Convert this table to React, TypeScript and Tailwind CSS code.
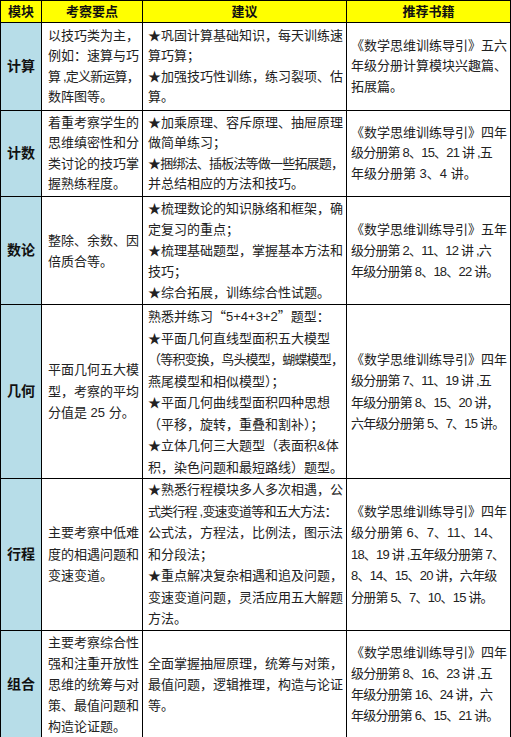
const FONT = "font-['Liberation_Sans','Noto_Sans_CJK_SC',sans-serif]";

type Row = {
  name: string;
  h: string;
  lead: string;
  points: string[];
  advice: string[];
  books: string[];
};

const rows: Row[] = [
  {
    name: "计算",
    h: "h-[88px]",
    lead: "leading-[20.5px]",
    points: ["以技巧类为主，", "例如：速算与巧", "算 ,定义新运算，", "数阵图等。"],
    advice: ["★巩固计算基础知识，每天训练速", "算巧算；", "★加强技巧性训练，练习裂项、估", "算。"],
    books: ["《数学思维训练导引》五六", "年级分册计算模块兴趣篇、", "拓展篇。"],
  },
  {
    name: "计数",
    h: "h-[86px]",
    lead: "leading-[20.5px]",
    points: ["着重考察学生的", "思维缜密性和分", "类讨论的技巧掌", "握熟练程度。"],
    advice: ["★加乘原理、容斥原理、抽屉原理", "做简单练习；", "★捆绑法、插板法等做一些拓展题，", "并总结相应的方法和技巧。"],
    books: ["《数学思维训练导引》四年", "级分册第 8、15、21 讲 ,五", "年级分册第 3、4 讲。"],
  },
  {
    name: "数论",
    h: "h-[108px]",
    lead: "leading-[21px]",
    points: ["整除、余数、因", "倍质合等。"],
    advice: ["★梳理数论的知识脉络和框架，确", "定复习的重点；", "★梳理基础题型，掌握基本方法和", "技巧；", "★综合拓展，训练综合性试题。"],
    books: ["《数学思维训练导引》五年", "级分册第 2、11、12 讲 ,六", "年级分册第 8、18、22 讲。"],
  },
  {
    name: "几何",
    h: "h-[173px]",
    lead: "leading-[21.5px]",
    points: ["平面几何五大模", "型，考察的平均", "分值是 25 分。"],
    advice: [
      "熟悉并练习“5+4+3+2”题型：",
      "★平面几何直线型面积五大模型",
      "（等积变换，鸟头模型，蝴蝶模型，",
      "燕尾模型和相似模型）；",
      "★平面几何曲线型面积四种思想",
      "（平移，旋转，重叠和割补）；",
      "★立体几何三大题型（表面积&体",
      "积，染色问题和最短路线）题型。",
    ],
    books: ["《数学思维训练导引》四年", "级分册第 7、11、19 讲 ,五", "年级分册第 8、15、20 讲，", "六年级分册第 5、7、15 讲。"],
  },
  {
    name: "行程",
    h: "h-[152px]",
    lead: "leading-[21.5px]",
    points: ["主要考察中低难", "度的相遇问题和", "变速变道。"],
    advice: [
      "★熟悉行程模块多人多次相遇，公",
      "式类行程 ,变速变道等和五大方法：",
      "公式法，方程法，比例法，图示法",
      "和分段法；",
      "★重点解决复杂相遇和追及问题，",
      "变速变道问题，灵活应用五大解题",
      "方法。",
    ],
    books: ["《数学思维训练导引》四年", "级分册第 6、7、11、14、", "18、19 讲 ,五年级分册第 7、", "8、14、15、20 讲，六年级", "分册第 5、7、10、15 讲。"],
  },
  {
    name: "组合",
    h: "h-[107px]",
    lead: "leading-[21px]",
    points: ["主要考察综合性", "强和注重开放性", "思维的统筹与对", "策、最值问题和", "构造论证题。"],
    advice: ["全面掌握抽屉原理，统筹与对策，", "最值问题，逻辑推理，构造与论证", "等。"],
    books: ["《数学思维训练导引》四年", "级分册第 8、16、23 讲 ,五", "年级分册第 16、24 讲，六", "年级分册第 6、15、21 讲。"],
  },
];

const textWidth = (s: string) =>
  [...s].reduce((w, c) => w + (c.charCodeAt(0) > 0x2000 ? 13 : 7), 0);

// quotes should come from the CJK font so they take a full em like the original
const withQuotes = (s: string) =>
  s.split(/([“”])/).map((part, i) =>
    part === "“" || part === "”" ? (
      <span key={i} className="font-['Noto_Sans_CJK_SC',sans-serif]">
        {part}
      </span>
    ) : (
      part
    )
  );

const Lines = ({ lines, max }: { lines: string[]; max: number }) => (
  <>
    {lines.map((l, i) => (
      <div
        key={i}
        className={textWidth(l) > max ? "whitespace-nowrap tracking-[-0.8px]" : "whitespace-nowrap"}
      >
        {withQuotes(l)}
      </div>
    ))}
  </>
);

const App = () => {
  return (
    <div className={`w-[511px] min-h-[737px] bg-white ${FONT} text-[13px] text-[#222]`}>
      <table className="table-fixed border-collapse w-[510px]">
        <colgroup>
          <col className="w-[41px]" />
          <col className="w-[101px]" />
          <col className="w-[204px]" />
          <col className="w-[164px]" />
        </colgroup>
        <thead>
          <tr className="h-[22px] bg-[#ffff00] font-bold text-[13px] text-[#111]">
            <th className="border border-black p-0 text-center">模块</th>
            <th className="border border-black p-0 text-center">考察要点</th>
            <th className="border border-black p-0 text-center">建议</th>
            <th className="border border-black p-0 text-center">推荐书籍</th>
          </tr>
        </thead>
        <tbody>
          {rows.map((r) => (
            <tr key={r.name} className={r.h}>
              <td className="border border-black bg-[#b7dde8] p-0 text-center align-middle text-[14px] font-bold text-[#111]">
                {r.name}
              </td>
              <td className={`border border-black pl-[6px] pr-[2px] py-0 align-middle ${r.lead}`}>
                <Lines lines={r.points} max={94} />
              </td>
              <td className={`border border-black pl-[5px] pr-[2px] py-0 align-middle ${r.lead}`}>
                <Lines lines={r.advice} max={197} />
              </td>
              <td className={`border border-black pl-[4px] pr-[2px] py-0 align-middle ${r.lead}`}>
                <Lines lines={r.books} max={158} />
              </td>
            </tr>
          ))}
        </tbody>
      </table>
    </div>
  );
};

export default App;
